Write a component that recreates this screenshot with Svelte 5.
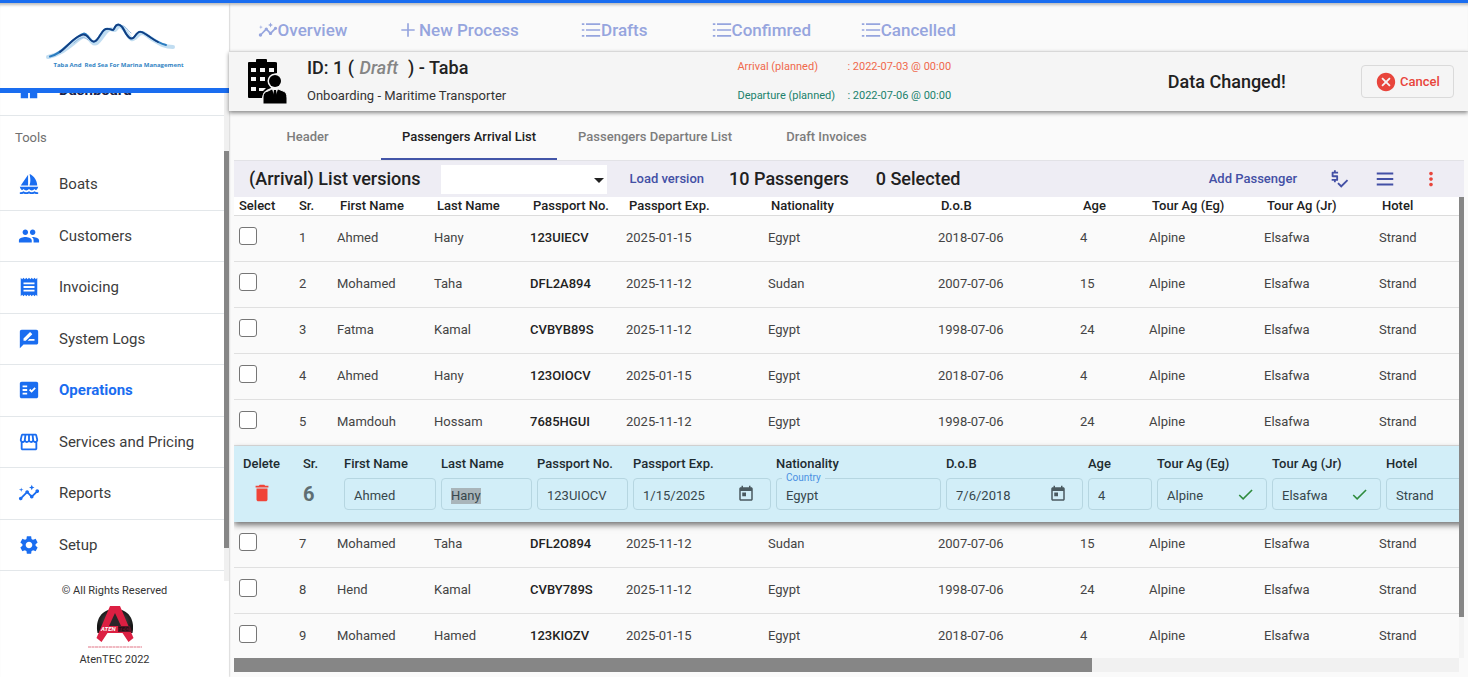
<script>
  import { onMount } from 'svelte';

  const icons = {
    dashboard: 'M3 13h8V3H3v10zm0 8h8v-6H3v6zm10 0h8V11h-8v10zm0-18v6h8V3h-8z',
    boat: 'M11 13.5V2L3 13.5h8zm10 0C21 6.5 14.5 1 12.5 1c0 0 1 3 1 6.5s-1 6-1 6H21zM22 15H2c.31 1.53 1.16 2.84 2.33 3.73.65-.27 1.22-.72 1.67-1.23.73.84 1.8 1.5 3 1.5s2.27-.66 3-1.5c.73.84 1.8 1.5 3 1.5s2.26-.66 3-1.5c.45.51 1.02.96 1.67 1.23C20.84 17.84 21.69 16.53 22 15zM22 23v-2h-1c-1.04 0-2.08-.35-3-1-1.83 1.3-4.17 1.3-6 0-1.83 1.3-4.17 1.3-6 0-.91.65-1.96 1-3 1H2v2h1c1.03 0 2.05-.25 3-.75 1.89 1 4.11 1 6 0 1.89 1 4.11 1 6 0 .95.5 1.97.75 3 .75h1z',
    people: 'M16 11c1.66 0 2.99-1.34 2.99-3S17.66 5 16 5c-1.66 0-3 1.34-3 3s1.34 3 3 3zm-8 0c1.66 0 2.99-1.34 2.99-3S9.66 5 8 5C6.34 5 5 6.34 5 8s1.34 3 3 3zm0 2c-2.33 0-7 1.17-7 3.5V19h14v-2.5c0-2.33-4.67-3.5-7-3.5zm8 0c-.29 0-.62.02-.97.05 1.16.84 1.97 1.97 1.97 3.45V19h6v-2.5c0-2.33-4.67-3.5-7-3.5z',
    receipt: 'M18 17H6v-2h12v2zm0-4H6v-2h12v2zm0-4H6V7h12v2zM3 22l1.5-1.5L6 22l1.5-1.5L9 22l1.5-1.5L12 22l1.5-1.5L15 22l1.5-1.5L18 22l1.5-1.5L21 22V2l-1.5 1.5L18 2l-1.5 1.5L15 2l-1.5 1.5L12 2l-1.5 1.5L9 2 7.5 3.5 6 2 4.5 3.5 3 2v20z',
    review: 'M20 2H4c-1.1 0-1.99.9-1.99 2L2 22l4-4h14c1.1 0 2-.9 2-2V4c0-1.1-.9-2-2-2zM6 14v-2.47l6.88-6.88c.2-.2.51-.2.71 0l1.77 1.77c.2.2.2.51 0 .71L8.47 14H6zm12 0h-7.5l2-2H18v2z',
    check: 'M20 3H4c-1.1 0-2 .9-2 2v14c0 1.1.9 2 2 2h16c1.1 0 2-.9 2-2V5c0-1.1-.9-2-2-2zM10 17H5v-2h5v2zm0-4H5v-2h5v2zm0-4H5V7h5v2zm4.82 6L12 12.16l1.41-1.41 1.41 1.42L17.99 9l1.42 1.42L14.82 15z',
    store: 'M21.9 8.89l-1.05-4.37c-.22-.9-1-1.52-1.91-1.52H5.05c-.9 0-1.69.63-1.9 1.52L2.1 8.89c-.24 1.02-.02 2.06.62 2.88.08.11.19.19.28.29V19c0 1.1.9 2 2 2h14c1.1 0 2-.9 2-2v-6.94c.09-.09.2-.18.28-.28.64-.82.87-1.87.62-2.89zm-2.99-3.9l1.05 4.37c.1.42.01.84-.25 1.17-.14.18-.44.47-.94.47-.61 0-1.14-.49-1.21-1.14L16.98 5l1.93-.01zM13 5h1.96l.54 4.52c.05.39-.07.78-.33 1.07-.22.26-.54.41-.95.41-.67 0-1.22-.59-1.22-1.31V5zM8.49 9.52L9.04 5H11v4.69c0 .72-.55 1.31-1.29 1.31-.34 0-.65-.15-.89-.41-.25-.29-.37-.68-.33-1.07zm-4.45-.16L5.05 5h1.97l-.58 4.86c-.08.65-.6 1.14-1.21 1.14-.49 0-.8-.29-.93-.47-.27-.32-.36-.75-.26-1.17zM5 19v-6.03c.08.01.15.03.23.03.87 0 1.66-.36 2.24-.95.6.6 1.4.95 2.31.95.87 0 1.65-.36 2.23-.93.59.57 1.39.93 2.29.93.84 0 1.64-.35 2.24-.95.58.59 1.37.95 2.24.95.08 0 .15-.02.23-.03V19H5z',
    insights: 'M21 8c-1.45 0-2.26 1.44-1.93 2.51l-3.55 3.56c-.3-.09-.74-.09-1.04 0l-2.55-2.55C12.27 10.45 11.46 9 10 9c-1.45 0-2.27 1.44-1.93 2.52l-4.56 4.55C2.44 15.74 1 16.55 1 18c0 1.1.9 2 2 2 1.45 0 2.26-1.44 1.93-2.51l4.55-4.56c.3.09.74.09 1.04 0l2.55 2.55C12.73 16.55 13.54 18 15 18c1.45 0 2.27-1.44 1.93-2.52l3.56-3.55c1.07.33 2.51-.48 2.51-1.93 0-1.1-.9-2-2-2zM15 9l.94-2.07L18 6l-2.06-.93L15 3l-.92 2.07L12 6l2.08.93zM3.5 11L4 9l2-.5L4 8l-.5-2L3 8l-2 .5L3 9z',
    settings: 'M19.14 12.94c.04-.3.06-.61.06-.94 0-.32-.02-.64-.07-.94l2.03-1.58c.18-.14.23-.41.12-.61l-1.92-3.32c-.12-.22-.37-.29-.59-.22l-2.39.96c-.5-.38-1.03-.7-1.62-.94l-.36-2.54c-.04-.24-.24-.41-.48-.41h-3.84c-.24 0-.43.17-.47.41l-.36 2.54c-.59.24-1.13.57-1.62.94l-2.39-.96c-.22-.08-.47 0-.59.22L2.74 8.87c-.12.21-.08.47.12.61l2.03 1.58c-.05.3-.09.63-.09.94s.02.64.07.94l-2.03 1.58c-.18.14-.23.41-.12.61l1.92 3.32c.12.22.37.29.59.22l2.39-.96c.5.38 1.03.7 1.62.94l.36 2.54c.05.24.24.41.48.41h3.84c.24 0 .44-.17.47-.41l.36-2.54c.59-.24 1.13-.56 1.62-.94l2.39.96c.22.08.47 0 .59-.22l1.92-3.32c.12-.22.07-.47-.12-.61l-2.01-1.58zM12 15.6c-1.98 0-3.6-1.62-3.6-3.6s1.62-3.6 3.6-3.6 3.6 1.62 3.6 3.6-1.62 3.6-3.6 3.6z',
    list: 'M1 4h3v2H1zM6 4h17v2H6zM1 11h3v2H1zM6 11h17v2H6zM1 18h3v2H1zM6 18h17v2H6z',
    plus: 'M20 13h-7v7h-2v-7H4v-2h7V4h2v7h7v2z',
    trash: 'M6 19c0 1.1.9 2 2 2h8c1.1 0 2-.9 2-2V7H6v12zM19 4h-3.5l-1-1h-5l-1 1H5v2h14V4z',
    today: 'M19 3h-1V1h-2v2H8V1H6v2H5c-1.11 0-1.99.9-1.99 2L3 19c0 1.1.89 2 2 2h14c1.1 0 2-.9 2-2V5c0-1.1-.9-2-2-2zm0 16H5V8h14v11zM7 10h5v5H7z',
    done: 'M9 16.2L4.8 12l-1.4 1.4L9 19 21 7l-1.4-1.4L9 16.2z',
    price: 'M11 12.500V9c0-.55-.45-1-1-1H6V6h5V4H8.500V2.500h-2V4H5c-.55 0-1 .45-1 1v4c0 .55.45 1 1 1h4v2H4v2h2.500v1.500h2V14H10c.55 0 1-.45 1-1zM20.590 12.520l-6.160 6.150-2.830-2.830-1.410 1.420L14.430 21.500 22 13.930z',
    menu: 'M3 19h18v-2H3v2zm0-6h18v-2H3v2zm0-8v2h18V5H3z',
    dots: 'M12 8c1.1 0 2-.9 2-2s-.9-2-2-2-2 .9-2 2 .9 2 2 2zm0 2c-1.100 0-2 .9-2 2s.9 2 2 2 2-.9 2-2-.9-2-2-2zm0 6c-1.100 0-2 .9-2 2s.9 2 2 2 2-.9 2-2-.9-2-2-2z',
    cancel: 'M12 2C6.470 2 2 6.470 2 12s4.470 10 10 10 10-4.470 10-10S17.530 2 12 2zm5 13.590L15.590 17 12 13.410 8.410 17 7 15.590 10.590 12 7 8.410 8.410 7 12 10.590 15.590 7 17 8.410 13.410 12 17 15.590z'
  };

  const menu = [
    ['boat', 'Boats'],
    ['people', 'Customers'],
    ['receipt', 'Invoicing'],
    ['review', 'System Logs'],
    ['check', 'Operations'],
    ['store', 'Services and Pricing'],
    ['insights', 'Reports'],
    ['settings', 'Setup']
  ];

  const sections = [
    ['insights', 'Overview'],
    ['plus', 'New Process'],
    ['list', 'Drafts'],
    ['list', 'Confimred'],
    ['list', 'Cancelled']
  ];

  const tabs = ['Header', 'Passengers Arrival List', 'Passengers Departure List', 'Draft Invoices'];

  const heads = ['Sr.', 'First Name', 'Last Name', 'Passport No.', 'Passport Exp.', 'Nationality', 'D.o.B', 'Age', 'Tour Ag (Eg)', 'Tour Ag (Jr)', 'Hotel'];

  const people = [
    [1, 'Ahmed', 'Hany', '123UIECV', '2025-01-15', 'Egypt', '2018-07-06', 4],
    [2, 'Mohamed', 'Taha', 'DFL2A894', '2025-11-12', 'Sudan', '2007-07-06', 15],
    [3, 'Fatma', 'Kamal', 'CVBYB89S', '2025-11-12', 'Egypt', '1998-07-06', 24],
    [4, 'Ahmed', 'Hany', '123OIOCV', '2025-01-15', 'Egypt', '2018-07-06', 4],
    [5, 'Mamdouh', 'Hossam', '7685HGUI', '2025-11-12', 'Egypt', '1998-07-06', 24],
    [6, 'Ahmed', 'Hany', '123UIOCV', '1/15/2025', 'Egypt', '7/6/2018', 4],
    [7, 'Mohamed', 'Taha', 'DFL2O894', '2025-11-12', 'Sudan', '2007-07-06', 15],
    [8, 'Hend', 'Kamal', 'CVBY789S', '2025-11-12', 'Egypt', '1998-07-06', 24],
    [9, 'Mohamed', 'Hamed', '123KIOZV', '2025-01-15', 'Egypt', '2018-07-06', 4]
  ].map((r) => [...r, 'Alpine', 'Elsafwa', 'Strand']);

  const editing = 6;
  const adornment = { 4: 'today', 6: 'today', 8: 'done', 9: 'done' };

  let editRow;
  onMount(() => {
    const field = editRow.querySelector('#field-2');
    field.focus();
    field.select();
  });
</script>

{#snippet icon(name, cls = '')}
  <svg class="icon {cls}" viewBox="0 0 24 24" aria-hidden="true"><path d={icons[name]} /></svg>
{/snippet}

<div class="app">
  <aside>
    <div class="brand">
      <svg class="peaks" viewBox="44 22 134 38" aria-hidden="true">
        <g fill="none" stroke-linecap="round" stroke-linejoin="round">
          <path d="M48 57C62 54 70 46 79 39S87 37 92 42 100 39 106 32 113 33 116 29 121 25 126 32 131 42 137 36 144 34 152 39 164 47 173 47" stroke="#9fcbea" stroke-width="4" opacity=".65" />
          <path d="M117 26C126 23 127 31 131 33M139 32C148 32 153 41 160 43M74 43C80 37 84 36 88 40" stroke="#8fb6dc" stroke-width="1" />
          <path d="M50 56.500C60 55 66 45 76 38S85 33 89 38 95 43 99 37 104 28 109 29 113 31 115 27 121 24 124 30 131 42 135 36 141 31 147 35 158 43 166 45" stroke="#2a7cc0" stroke-width="2" />
          <path d="M60 52C67 47 70 42 76 38S85 33 89 38 95 43 99 37 104 28 109 29 113 31 115 27 121 24 124 30 131 42 135 36 141 31 147 35 154 40 158 42" stroke="#123d80" stroke-width="1.700" />
        </g>
      </svg>
      <div class="brand-name">Taba And &nbsp;Red Sea For Marina Management</div>
    </div>
    <div class="side-body">
      <nav>
        <a class="item dash" href="#dashboard">{@render icon('dashboard')}<span>Dashboard</span></a>
        <div class="group">Tools</div>
        <div class="items">
          {#each menu as [ic, label]}
            <a class="item" class:active={label === 'Operations'} href="#{ic}">{@render icon(ic)}<span>{label}</span></a>
          {/each}
        </div>
      </nav>
      <div class="side-track"><div class="side-thumb"></div></div>
    </div>
    <footer>
      <div>© All Rights Reserved</div>
      <svg class="aten" viewBox="0 0 56 46" aria-hidden="true">
        <defs>
          <radialGradient id="disc"><stop offset="0" stop-color="#666" /><stop offset="1" stop-color="#151515" /></radialGradient>
        </defs>
        <path d="M10.500 29C8 16 14 5 28 5s20 11 17.500 24z" fill="url(#disc)" />
        <path d="M23 2h10l13.500 32-5 4-6-9h-15l-6 9-5-4z" fill="#dc1f42" />
        <path d="M28 9l6 13H22z" fill="#2b2529" />
        <path d="M31 22h12l2 6H31z" fill="#5a1426" />
        <text x="14" y="27" font-size="6" font-weight="700" font-style="italic" fill="#fff">ATEN</text>
        <text x="31" y="27" font-size="6" font-weight="700" font-style="italic" fill="#1c1013">TEC</text>
        <path d="M1 43h54" stroke="#eba3ae" stroke-width="1.500" stroke-dasharray="3 .5" />
      </svg>
      <div>AtenTEC 2022</div>
    </footer>
  </aside>

  <main>
    <nav class="sections">
      {#each sections as [ic, label]}
        <a href="#{label}" class:spaced={ic === 'plus'}>{@render icon(ic)}{label}</a>
      {/each}
    </nav>

    <header class="summary">
      <svg class="building" viewBox="0 0 40 46" aria-hidden="true">
        <path d="M1 4q0-1 1-1h7V1q0-1 1-1h9q1 0 1 1v2h8q2 0 2 1v10q-9 2-8 11l2 4q-8 2-9 10H2q-1 0-1-1z" fill="#000" />
        <path d="M4 9h5v4H4zM13 9h5v4h-5zM22 9h5v4h-5zM4 18h5v4H4zM13 18h5v4h-5zM4 28h5v4H4zM12 29h7l-3 3h-4z" fill="#f5f5f5" />
        <circle cx="28" cy="22" r="7.500" fill="#f5f5f5" />
        <circle cx="28" cy="22" r="6" fill="#000" />
        <path d="M16 45v-7q0-5 5-6l4-2h6l5 2q4 1 4 7v6z" fill="#000" stroke="#f5f5f5" stroke-width="1" />
        <path d="M25 30l3 9 3-9z" fill="#f5f5f5" />
        <path d="M27 31h2l1 6-2 3-2-3z" fill="#000" />
      </svg>
      <div class="identity">
        <h1>ID: 1 ( <em>Draft</em>&nbsp; ) - Taba</h1>
        <p>Onboarding - Maritime Transporter</p>
      </div>
      <dl>
        <dt class="arrival">Arrival (planned)</dt>
        <dd class="arrival">: 2022-07-03 @ 00:00</dd>
        <dt class="departure">Departure (planned)</dt>
        <dd class="departure">: 2022-07-06 @ 00:00</dd>
      </dl>
      <h2>Data Changed!</h2>
      <button class="cancel" type="button">{@render icon('cancel')}Cancel</button>
    </header>

    <div class="content">
      <div class="tabs" role="tablist">
        {#each tabs as t, i}
          <button type="button" role="tab" aria-selected={i === 1} class:selected={i === 1}>{t}</button>
        {/each}
      </div>

      <div class="toolbar">
        <label class="title" for="version">(Arrival) List versions</label>
        <div class="picker"><select id="version"><option></option></select></div>
        <button class="load" type="button">Load version</button>
        <span class="title">10 Passengers</span>
        <span class="title">0 Selected</span>
        <div class="actions">
          <button type="button">Add Passenger</button>
          <button type="button" aria-label="Prices">{@render icon('price')}</button>
          <button type="button" aria-label="List">{@render icon('menu')}</button>
          <button type="button" aria-label="More" class="more">{@render icon('dots')}</button>
        </div>
      </div>

      <div class="viewport">
        <div class="sheet">
          <table>
            <colgroup>
              {#each ['sel', 'sr', 'fn', 'ln', 'pn', 'pe', 'nat', 'dob', 'age', 'teg', 'tjr', 'hotel'] as c}<col class={c} />{/each}
            </colgroup>
            <thead>
              <tr>
                <th scope="col">Select</th>
                {#each heads as h}<th scope="col">{h}</th>{/each}
              </tr>
            </thead>
            <tbody>
              {#each people as p}
                {#if p[0] === editing}
                  <tr>
                    <td class="edit-cell" colspan="12">
                      <div class="edit" bind:this={editRow}>
                        <div class="field">
                          <span class="cap">Delete</span>
                          <button class="remove" type="button" aria-label="Delete passenger">{@render icon('trash')}</button>
                        </div>
                        <div class="field"><span class="cap">Sr.</span><strong>{p[0]}</strong></div>
                        {#each heads.slice(1) as h, i}
                          <div class="field">
                            <label class="cap" for="field-{i + 1}">{h}</label>
                            <div class="box">
                              {#if h === 'Nationality'}<span class="float">Country</span>{/if}
                              <input id="field-{i + 1}" type="text" value={p[i + 1]} />
                              {#if adornment[i + 1]}{@render icon(adornment[i + 1], adornment[i + 1])}{/if}
                            </div>
                          </div>
                        {/each}
                      </div>
                    </td>
                  </tr>
                {:else}
                  <tr class="row">
                    <td><input type="checkbox" aria-label="Select {p[1]} {p[2]}" /></td>
                    {#each p as v, i}<td class:strong={i === 3}>{v}</td>{/each}
                  </tr>
                {/if}
              {/each}
            </tbody>
          </table>
        </div>
        <div class="v-track"><div class="v-thumb"></div></div>
        <div class="h-track"><div class="h-thumb"></div></div>
      </div>
    </div>
  </main>
</div>

<style>
  :global(body) { margin: 0; background: #fafafa; }
  .app, .app * { box-sizing: border-box; }
  .app {
    display: flex;
    height: 100vh;
    overflow: hidden;
    border-top: 3px solid #1a6df0;
    font: 13px/16px Roboto, "Liberation Sans", sans-serif;
    color: #212121;
  }
  h1, h2, p, dl, dd { margin: 0; }
  a { text-decoration: none; color: inherit; }
  button, input, select { font: inherit; color: inherit; }
  button { border: 0; background: none; padding: 0; }
  .icon { width: 22px; height: 22px; fill: currentColor; flex: none; display: block; }

  aside {
    width: 229px;
    flex: none;
    display: flex;
    flex-direction: column;
    background: #fff;
    box-shadow: inset 0 4px 3px -2px #bbb, 0 0 2px #aaa;
    z-index: 1;
  }
  .brand {
    height: 90px;
    flex: none;
    display: flex;
    flex-direction: column;
    align-items: center;
    padding-top: 19px;
    border-bottom: 5px solid #1a6df0;
  }
  .peaks { width: 134px; height: 38px; margin-right: 8px; }
  .brand-name {
    font: 700 6px/8px "Open Sans", sans-serif;
    color: #3184c4;
    margin-left: 8px;
    padding-top: 1px;
    white-space: nowrap;
  }
  .side-body { flex: 1; min-height: 0; display: flex; overflow: hidden; }
  .side-body nav { flex: 1; margin-top: -28px; }
  .side-track { width: 5px; background: #f0f0f0; padding-top: 58px; }
  .side-thumb { height: 397px; background: #868686; }
  .items { display: grid; grid-template-rows: repeat(8, 1fr); height: 412px; }
  .item {
    display: flex;
    align-items: center;
    gap: 19px;
    padding-left: 18px;
    border-bottom: 1px solid #e3e7ea;
    font-size: 15px;
    color: #3c3c3c;
  }
  .item .icon { color: #1a6df0; }
  .dash { height: 51px; font-weight: 700; color: #1c2344; }
  .item.active { color: #1a6df0; font-weight: 700; }
  .group { height: 43px; padding-left: 15px; line-height: 43px; color: #707070; }
  footer {
    height: 96px;
    flex: none;
    display: flex;
    flex-direction: column;
    align-items: center;
    padding-top: 2px;
    font-size: 11px;
    color: #333;
  }
  .aten { width: 56px; height: 46px; margin: 5px 0 2px; }

  main { flex: 1; min-width: 0; display: flex; flex-direction: column; }
  .sections {
    display: flex;
    height: 48px;
    flex: none;
    box-shadow: inset 0 4px 3px -2px #bbb;
    font-size: 17px;
    font-weight: 500;
    color: #96a5de;
  }
  .sections a {
    display: flex;
    align-items: center;
    justify-content: center;
    min-width: 147px;
    padding: 5px 22px 0;
  }
  .sections .spaced { gap: 1px; }
  .sections .icon { width: 20px; height: 20px; }

  .summary {
    display: grid;
    grid-template-columns: 60px 430fr 430fr 193fr 93px;
    align-items: center;
    height: 60px;
    flex: none;
    padding: 0 14px 0 18px;
    background: #f5f5f5;
    border-top: 1px solid #d8d8d8;
    box-shadow: 0 2px 4px rgba(0, 0, 0, .45);
    z-index: 1;
  }
  .building { width: 40px; height: 46px; }
  h1, h2, .title { font-size: 18px; font-weight: 500; line-height: 24px; white-space: nowrap; }
  h1 { color: #222; }
  h1 em { color: #858585; margin: 0 1px; }
  .identity { padding-bottom: 4px; }
  .identity p { margin-top: 8px; color: #333; }
  dl { display: grid; grid-template-columns: 110px auto; justify-content: start; row-gap: 13px; font-size: 11px; }
  .arrival { color: #f0694c; }
  .departure { color: #20826c; }
  .cancel {
    display: flex;
    align-items: center;
    justify-content: center;
    gap: 3px;
    height: 33px;
    border: 1px solid #dadada;
    border-radius: 4px;
    color: #e8453c;
    font-weight: 500;
  }

  .content { flex: 1; min-height: 0; padding: 0 4px 0 5px; display: flex; flex-direction: column; }
  .tabs { display: flex; height: 50px; flex: none; border-bottom: 1px solid #e2e2e6; }
  .tabs button {
    min-width: 147px;
    padding: 4px 21px 0;
    font-weight: 500;
    color: #7d7d7d;
    border-bottom: 2px solid transparent;
  }
  .tabs .selected { color: #212121; border-color: #4355a8; }

  .toolbar {
    display: flex;
    align-items: center;
    height: 36px;
    flex: none;
    padding-left: 15px;
    background: #eeedf4;
  }
  .title { margin-right: 27px; }
  label.title { margin-right: 20px; }
  .picker { position: relative; width: 166px; height: 29px; background: #fff; }
  .picker::after {
    content: "";
    position: absolute;
    right: 3px;
    top: 13px;
    border: 5px solid transparent;
    border-top-color: #222;
    border-bottom: 0;
    pointer-events: none;
  }
  .picker select { appearance: none; width: 100%; height: 100%; border: 0; background: transparent; }
  .load, .actions { color: #4350a5; font-weight: 500; }
  .load { margin: 0 25px 0 23px; }
  .actions { margin-left: auto; display: flex; align-items: center; gap: 24px; padding-right: 22px; }
  .actions button:first-child { margin-right: 7px; }
  .actions .icon { width: 22px; height: 22px; }
  .actions .more { color: #e8453c; }

  .viewport {
    display: grid;
    grid-template-columns: minmax(0, 1fr) 5px;
    grid-template-rows: 461px 14px;
  }
  .sheet { overflow: hidden; }
  .v-track { background: #f4f4f4; }
  .v-thumb { height: 420px; background: #868686; }
  .h-track { background: #f1f1f1; }
  .h-thumb { width: 70%; height: 100%; background: #868686; }

  table { width: 1746px; table-layout: fixed; border-collapse: separate; border-spacing: 0; }
  .sel { width: 63px; }
  .sr { width: 38px; }
  .fn { width: 97px; }
  .ln, .pn { width: 96px; }
  .pe, .dob { width: 142px; }
  .nat { width: 170px; }
  .age { width: 69px; }
  .teg, .tjr { width: 115px; }
  th {
    height: 19px;
    padding: 0 0 0 5px;
    text-align: left;
    font-weight: 500;
    background: #fff;
    border-bottom: 1px solid #dcdcdc;
    white-space: nowrap;
  }
  th:nth-child(2) { padding-left: 2px; }
  td { padding: 0 0 0 2px; color: #444; }
  .row td { height: 46px; padding-bottom: 2px; border-bottom: 1px solid #e0e0e0; }
  .row td:first-child { padding: 0 0 5px 5px; }
  .row .strong { font-weight: 500; color: #222; }
  input[type="checkbox"] {
    appearance: none;
    display: block;
    width: 18px;
    height: 18px;
    margin: 0;
    border: 1px solid #767676;
    border-radius: 3px;
    background: #fff;
  }
  .edit-cell { padding: 0; }
  .edit {
    position: relative;
    display: grid;
    grid-template-columns: 60px 41px 97px 96px 96px 143px 170px 142px 69px 115px 114px 1fr;
    height: 76px;
    padding: 10px 0 0 9px;
    background: #d2eef8;
    box-shadow: 0 3px 6px rgba(0, 0, 0, .55);
  }
  .field { display: flex; flex-direction: column; gap: 6px; padding-right: 5px; align-items: flex-start; }
  .cap { font-weight: 500; color: #1e2b30; white-space: nowrap; }
  .remove { margin-left: 8px; margin-top: 4px; color: #f04438; }
  .field strong { font-size: 20px; font-weight: 700; line-height: 32px; color: #5f6e73; }
  .box {
    position: relative;
    display: flex;
    align-items: center;
    width: 100%;
    height: 32px;
    border: 1px solid #b6d6e1;
    border-radius: 4px;
    padding-left: 9px;
  }
  .box input {
    flex: 1;
    min-width: 0;
    width: 0;
    padding: 4px 0 0;
    border: 0;
    outline: 0;
    background: none;
    color: #37474c;
  }
  .box input::selection { background: #a9b5ba; color: #37474c; }
  .box .icon { width: 18px; height: 18px; margin-right: 15px; color: #4b5a60; }
  .box .done { width: 19px; height: 19px; margin-right: 11px; color: #2e8b3d; }
  .float {
    position: absolute;
    left: 5px;
    top: -8px;
    padding: 0 4px;
    background: #d2eef8;
    color: #4a90e2;
    font-size: 10px;
    line-height: 14px;
  }
</style>
